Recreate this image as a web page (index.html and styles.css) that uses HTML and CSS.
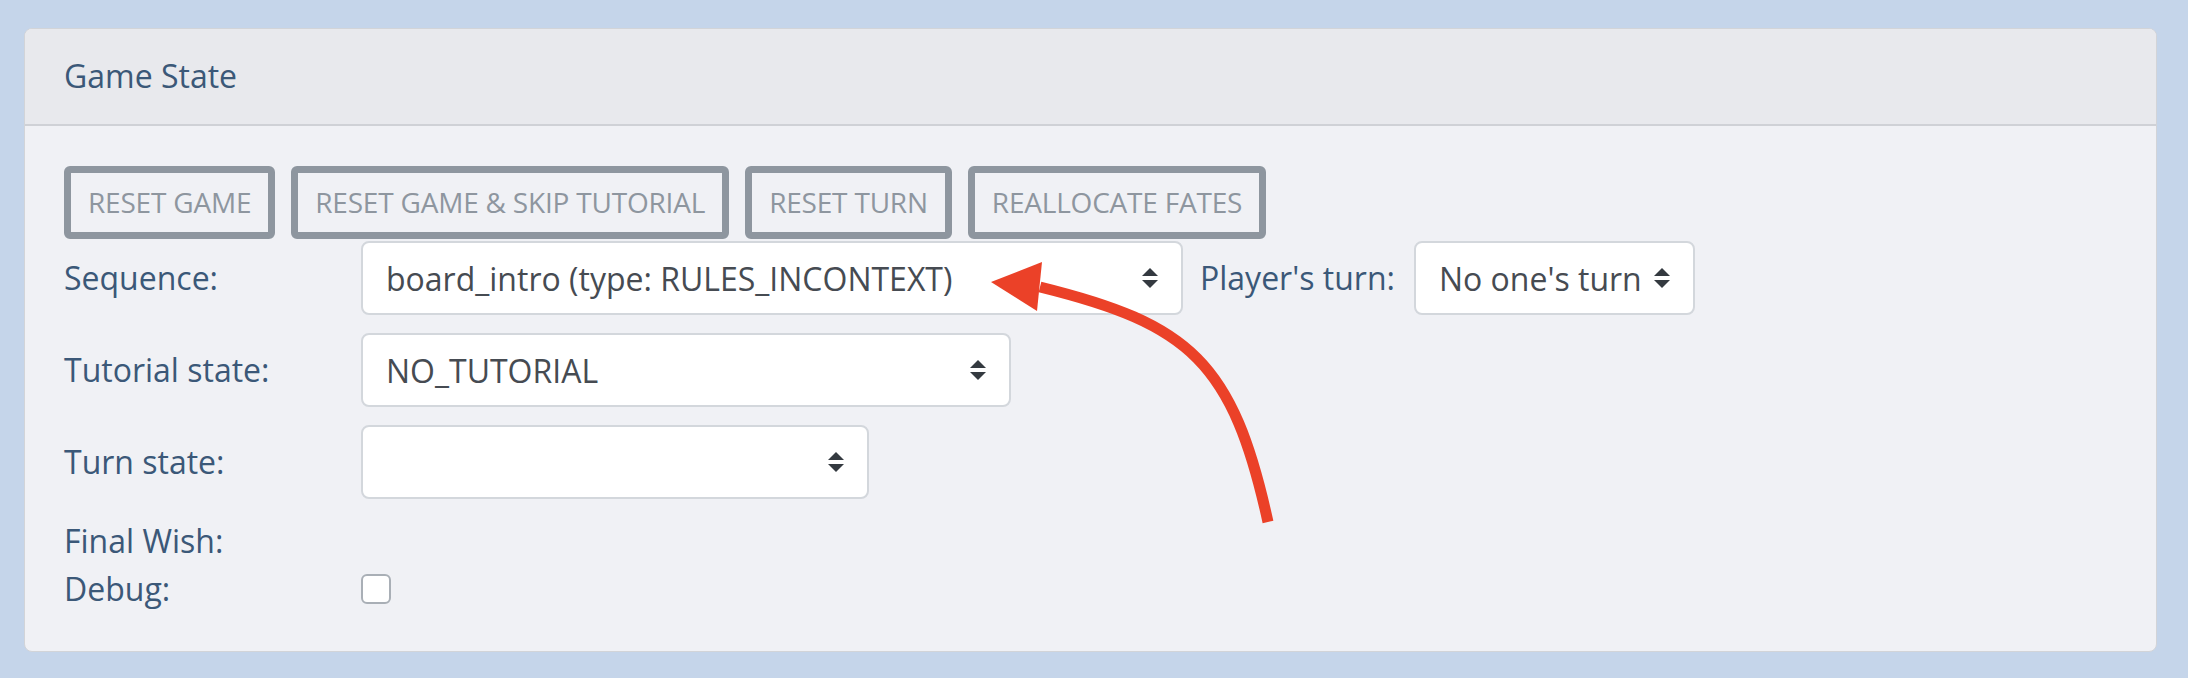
FILE: index.html
```html
<!DOCTYPE html>
<html lang="en">
<head>
<meta charset="utf-8">
<title>Game State</title>
<link rel="stylesheet" href="styles.css">
</head>
<body>
<div class="page">
  <section class="card">
    <header class="card-header">Game State</header>
    <div class="card-body">
      <div class="actions">
        <button class="btn-outline">RESET GAME</button>
        <button class="btn-outline">RESET GAME &amp; SKIP TUTORIAL</button>
        <button class="btn-outline">RESET TURN</button>
        <button class="btn-outline">REALLOCATE FATES</button>
      </div>
      <div class="form">
        <div class="row row-select">
          <span class="label">Sequence:</span>
          <div class="select select-seq">
            <span class="select-value">board_intro (type: RULES_INCONTEXT)</span>
            <svg class="caret" viewBox="0 0 8 10" width="16" height="20"><path d="M4 0L0 4h8zM4 10L0 6h8z"/></svg>
          </div>
          <span class="label label-inline">Player's turn:</span>
          <div class="select select-player">
            <span class="select-value">No one's turn</span>
            <svg class="caret" viewBox="0 0 8 10" width="16" height="20"><path d="M4 0L0 4h8zM4 10L0 6h8z"/></svg>
          </div>
        </div>
        <div class="row row-select">
          <span class="label">Tutorial state:</span>
          <div class="select select-tut">
            <span class="select-value">NO_TUTORIAL</span>
            <svg class="caret" viewBox="0 0 8 10" width="16" height="20"><path d="M4 0L0 4h8zM4 10L0 6h8z"/></svg>
          </div>
        </div>
        <div class="row row-select">
          <span class="label">Turn state:</span>
          <div class="select select-turn">
            <span class="select-value"></span>
            <svg class="caret" viewBox="0 0 8 10" width="16" height="20"><path d="M4 0L0 4h8zM4 10L0 6h8z"/></svg>
          </div>
        </div>
        <div class="row">
          <span class="label">Final Wish:</span>
        </div>
        <div class="row">
          <span class="label">Debug:</span>
          <span class="checkbox"></span>
        </div>
      </div>
    </div>
  </section>
  <svg class="annotation" viewBox="0 0 2188 678" width="2188" height="678">
    <path d="M1268 522 C1233 362 1190 324 1040 287" fill="none" stroke="#eb4128" stroke-width="11"/>
    <polygon points="991,282 1042,262 1037,311" fill="#eb4128"/>
  </svg>
</div>
</body>
</html>
```
FILE: styles.css
```css
* { box-sizing: border-box; }
html, body { margin: 0; padding: 0; }
body {
  background: #c5d5ea;
  font-family: "Open Sans", "Liberation Sans", sans-serif;
}
.page {
  position: relative;
  width: 2188px;
  height: 678px;
  padding: 28px 31px 0 24px;
}
.card {
  background: #f0f1f5;
  border: 1px solid #d2d4d8;
  border-radius: 8px;
  overflow: hidden;
}
.card-header {
  background: #e8e9ed;
  border-bottom: 2px solid #cfd1d6;
  padding: 23px 39px 24px;
  font-size: 32px;
  line-height: 48px;
  color: #3b5878;
}
.card-body {
  padding: 40px 39px 38px;
}
.actions {
  display: flex;
  gap: 16px;
  margin-bottom: 2px;
}
.btn-outline {
  font-family: inherit;
  font-size: 28px;
  line-height: 35px;
  letter-spacing: -0.2px;
  padding: 12px 17px;
  border: 7px solid #8e969f;
  border-radius: 6px;
  background: transparent;
  color: #8e969f;
  text-transform: uppercase;
  cursor: pointer;
}
.row {
  display: flex;
  align-items: center;
}
.row-select {
  margin-bottom: 18px;
}
.label {
  width: 297px;
  flex: none;
  font-size: 32px;
  line-height: 48px;
  color: #3b5878;
}
.label-inline {
  width: auto;
  margin: 0 19px 0 17px;
}
.select {
  flex: none;
  height: 74px;
  background: #fff;
  border: 2px solid #d3d7dc;
  border-radius: 8px;
  display: flex;
  align-items: center;
  justify-content: space-between;
  padding: 0 23px;
  font-size: 32px;
  color: #464b52;
  white-space: nowrap;
}
.caret { fill: #343a40; flex: none; }
.select-seq { width: 822px; }
.select-player { width: 281px; }
.select-tut { width: 650px; }
.select-turn { width: 508px; }
.checkbox {
  width: 30px;
  height: 30px;
  background: #fff;
  border: 2px solid #a9afb6;
  border-radius: 6px;
}
.annotation {
  position: absolute;
  left: 0;
  top: 0;
  pointer-events: none;
}
```
